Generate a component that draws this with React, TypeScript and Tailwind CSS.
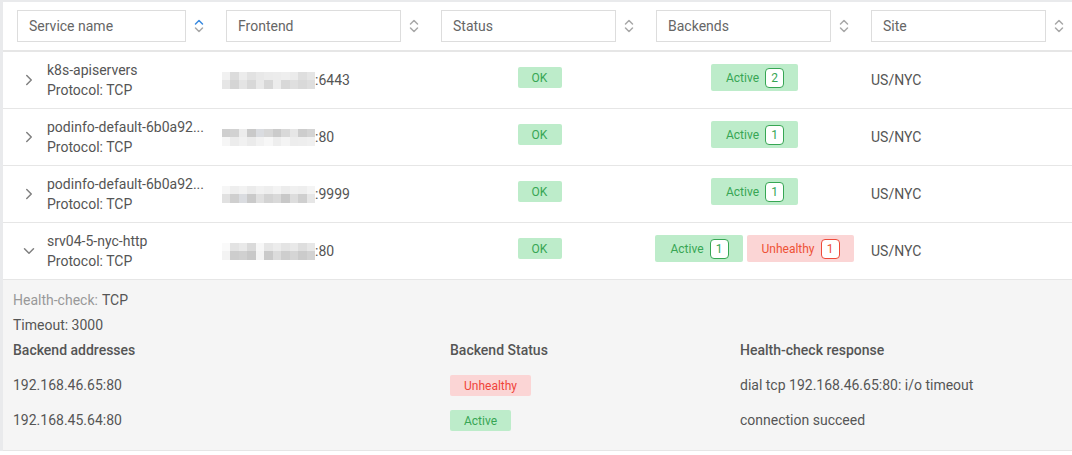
import { ChevronRight, ChevronDown } from 'lucide-react';

type Row = {
  name: string;
  port: string;
  blur: string[][];
  backends: { label: string; count: number; tone: 'ok' | 'bad' }[];
  open?: boolean;
};

const B1 = [
  ['#f1f1f1', '#dcdcdc', '#ececec', '#e2e2e2', '#e8e8e8', '#ebebeb', '#ececec', '#eeeeee', '#ebebeb', '#dedede', '#e5e5e5'],
  ['#e6e6e6', '#d5d5d5', '#e4e4e4', '#d8d8d8', '#e9e9e9', '#d7d7d7', '#ececec', '#d8d8d8', '#dfdfdf', '#d9d9d9', '#dedede'],
];
const B2 = [
  ['#cfcfcf', '#d2d2d2', '#ececec', '#c9c9c9', '#dadce0', '#d7d7d7', '#cbcbcb', '#d9d9d9', '#e6e6e6', '#cdcdcd', '#d4d4d4'],
  ['#f6f6f6', '#ececec', '#f1f1f1', '#ebebeb', '#f2f2f2', '#f7f7f7', '#eeeeee', '#f4f4f4', '#ededed', '#eeeeee', '#f0f0f0'],
];
const B3 = [
  ['#f6f6f6', '#eeeeee', '#f2f2f2', '#ebebeb', '#f1f1f1', '#eeeeee', '#f3f3f3', '#ececec', '#f0f0f0', '#eeeeee', '#f4f4f4'],
  ['#e1e1e1', '#cfcfcf', '#dadce0', '#cacaca', '#e0e0e0', '#d3d3d3', '#d9d9d9', '#c8c8c8', '#dddddd', '#cfcfcf', '#e6e6e6'],
];
const B4 = [
  ['#fafafa', '#e3e3e3', '#e9e9e9', '#dadada', '#f7f7f7', '#e6e6e6', '#ececec', '#e4e4e4', '#e9e9e9', '#dedede', '#e7e7e7'],
  ['#f3f3f3', '#cdcdcd', '#d0d0d0', '#c8c8c8', '#f4f4f4', '#cacaca', '#dcdcdc', '#cecece', '#d5d5d5', '#cbcbcb', '#d2d2d2'],
];

const rows: Row[] = [
  { name: 'k8s-apiservers', port: ':6443', blur: B1, backends: [{ label: 'Active', count: 2, tone: 'ok' }] },
  { name: 'podinfo-default-6b0a92...', port: ':80', blur: B2, backends: [{ label: 'Active', count: 1, tone: 'ok' }] },
  { name: 'podinfo-default-6b0a92...', port: ':9999', blur: B3, backends: [{ label: 'Active', count: 1, tone: 'ok' }] },
  {
    name: 'srv04-5-nyc-http',
    port: ':80',
    blur: B4,
    backends: [
      { label: 'Active', count: 1, tone: 'ok' },
      { label: 'Unhealthy', count: 1, tone: 'bad' },
    ],
    open: true,
  },
];

function SortIcon({ active }: { active?: boolean }) {
  return (
    <svg width="10" height="14" viewBox="0 0 10 14" fill="none" strokeWidth="1.5" strokeLinecap="round" strokeLinejoin="round">
      <path d="M1.5 5 L5 1.5 L8.5 5" stroke={active ? '#3b8be0' : '#a8a8a8'} />
      <path d="M1.5 9 L5 12.5 L8.5 9" stroke="#a8a8a8" />
    </svg>
  );
}

function HeaderCell({ label, first, active }: { label: string; first?: boolean; active?: boolean }) {
  return (
    <div className={`shrink-0 flex items-center gap-[8px] ${first ? 'w-[214px] pl-[14px]' : 'w-[215px] pl-[9px]'}`}>
      <div
        className={`h-[32px] ${first ? 'w-[169px]' : 'w-[175px]'} border border-[#dddddd] bg-white px-[11px] flex items-center text-[#666]`}
      >
        {label}
      </div>
      <SortIcon active={active} />
    </div>
  );
}

function Mosaic({ cells }: { cells: string[][] }) {
  return (
    <div className="flex flex-col w-[93px]">
      {cells.map((line, i) => (
        <div key={i} className="flex h-[8.5px]">
          {line.map((c, j) => (
            <div key={j} className="flex-1" style={{ background: c }} />
          ))}
        </div>
      ))}
    </div>
  );
}

function CountBadge({ label, count, tone }: { label: string; count: number; tone: 'ok' | 'bad' }) {
  const ok = tone === 'ok';
  return (
    <div
      className={`h-[27px] flex items-center gap-[6px] pl-[15px] pr-[14px] rounded-[2px] text-[12px] ${
        ok ? 'bg-[#bdecca] text-[#37a654]' : 'bg-[#fbd5d5] text-[#ee5236]'
      }`}
    >
      <span>{label}</span>
      <span
        className={`w-[19px] h-[20px] flex items-center justify-center bg-white rounded-[4px] border ${
          ok ? 'border-[#37a654]' : 'border-[#ee4a3a]'
        }`}
      >
        {count}
      </span>
    </div>
  );
}

function Pill({ label, tone }: { label: string; tone: 'ok' | 'bad' }) {
  return (
    <span
      className={`inline-flex h-[21px] items-center px-[14px] rounded-[2px] text-[12px] ${
        tone === 'ok' ? 'bg-[#bdecca] text-[#37a654]' : 'bg-[#fbd5d5] text-[#f0443a]'
      }`}
    >
      {label}
    </span>
  );
}

export default function App() {
  return (
    <div className="w-[1072px] h-[455px] overflow-hidden bg-white font-['Roboto',sans-serif] text-[14px] text-[#555]">
      <div className="border-t-2 border-l-[3px] border-[#e9eaec]">
        <div className="flex h-[50px] items-center border-b-2 border-[#e6e6e6]">
          <HeaderCell label="Service name" first active />
          <HeaderCell label="Frontend" />
          <HeaderCell label="Status" />
          <HeaderCell label="Backends" />
          <HeaderCell label="Site" />
        </div>

        {rows.map((r, i) => (
          <div key={i}>
            <div className="flex h-[57px] items-center border-b border-[#e6e6e6]">
              <div className="shrink-0 w-[214px] flex items-center pl-[17px]">
                {r.open ? (
                  <ChevronDown className="w-[18px] h-[18px] text-[#808080]" strokeWidth={2} />
                ) : (
                  <ChevronRight className="w-[18px] h-[18px] text-[#808080]" strokeWidth={2} />
                )}
                <div className="ml-[9px] leading-[20px]">
                  <div>{r.name}</div>
                  <div>Protocol: TCP</div>
                </div>
              </div>
              <div className="shrink-0 w-[215px] flex items-center pl-[5px]">
                <Mosaic cells={r.blur} />
                <span>{r.port}</span>
              </div>
              <div className="shrink-0 w-[215px] flex justify-center mb-[5px]">
                <span className="w-[44px] h-[21px] flex items-center justify-center bg-[#bdecca] text-[#37a654] text-[12px] rounded-[2px]">
                  OK
                </span>
              </div>
              <div className="shrink-0 w-[215px] flex justify-center gap-[4px] mb-[5px]">
                {r.backends.map((b, j) => (
                  <CountBadge key={j} {...b} />
                ))}
              </div>
              <div className="flex-1 pl-[9px]">US/NYC</div>
            </div>

            {r.open && (
              <div className="bg-[#f5f5f5] border-b border-[#e6e6e6] pl-[10px] pt-[8px] pb-[12px]">
                <div className="h-[25px] flex items-center">
                  <span className="text-[#999]">Health-check:</span>
                  <span className="ml-[4px]">TCP</span>
                </div>
                <div className="h-[25px] flex items-center">Timeout: 3000</div>
                <div className="grid grid-cols-[437px_290px_1fr]">
                  <div className="h-[30px] pb-[5px] flex items-center font-medium">Backend addresses</div>
                  <div className="h-[30px] pb-[5px] flex items-center font-medium">Backend Status</div>
                  <div className="h-[30px] pb-[5px] flex items-center font-medium">Health-check response</div>

                  <div className="h-[35px] flex items-center">192.168.46.65:80</div>
                  <div className="h-[35px] flex items-center">
                    <Pill label="Unhealthy" tone="bad" />
                  </div>
                  <div className="h-[35px] flex items-center">dial tcp 192.168.46.65:80: i/o timeout</div>

                  <div className="h-[35px] flex items-center">192.168.45.64:80</div>
                  <div className="h-[35px] flex items-center">
                    <Pill label="Active" tone="ok" />
                  </div>
                  <div className="h-[35px] flex items-center">connection succeed</div>
                </div>
              </div>
            )}
          </div>
        ))}
      </div>
    </div>
  );
}
